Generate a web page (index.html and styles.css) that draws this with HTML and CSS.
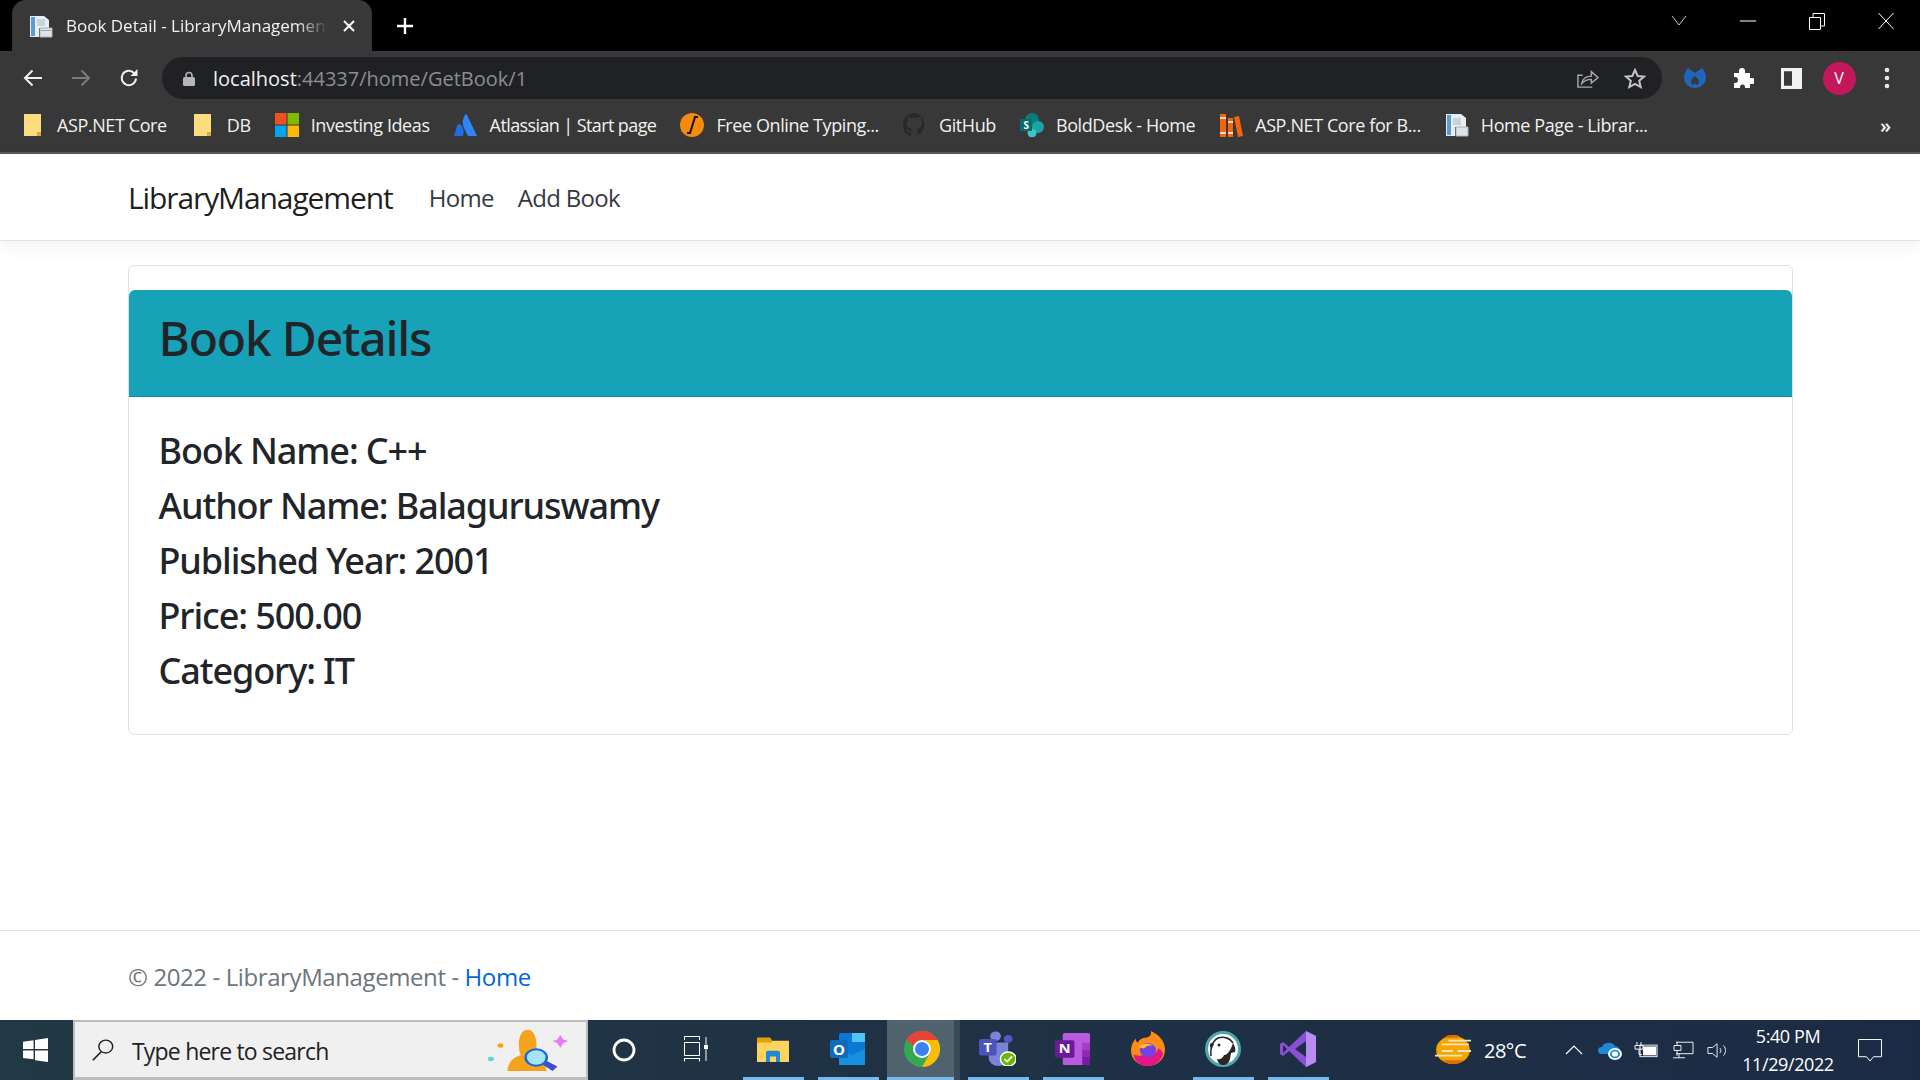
FILE: index.html
```html
<!DOCTYPE html>
<html lang="en">
<head>
  <meta charset="UTF-8" />
  <title>Book Detail - LibraryManagement</title>
  <link rel="stylesheet" href="styles.css">
</head>
<body>
  <!-- browser chrome -->
  <div class="tabstrip">
    <div class="tab">
      <svg class="favicon" viewBox="0 0 24 24"><path d="M1 2h14l5 4v8H10v9H1z" fill="#e8edf2"/><path d="M2 3h4v19H2z" fill="#5b9bd5"/><path d="M8 5h8v7H8z" fill="#c9d3dc"/><path d="M11 14h12v9H11z" fill="#dde3e8" stroke="#aab4bc"/><path d="M12 16h10v1H12z" fill="#9aa6b0"/></svg>
      <span class="tab-title">Book Detail - LibraryManagement</span>
      <svg class="tab-close" viewBox="0 0 14 14"><path d="M2 2l10 10M12 2L2 12" stroke="#fff" stroke-width="2"/></svg>
    </div>
    <svg class="new-tab" viewBox="0 0 18 18"><path d="M9 1v16M1 9h16" stroke="#fff" stroke-width="2.4"/></svg>
    <div class="win-controls">
      <span class="win-btn"><svg width="16" height="12" viewBox="0 0 16 12"><path d="M1 1l7 9 7-9" fill="none" stroke="#ccc"/></svg></span>
      <span class="win-btn"><svg width="16" height="12" viewBox="0 0 16 12"><path d="M0 6h16" stroke="#fff"/></svg></span>
      <span class="win-btn"><svg width="16" height="18" viewBox="0 0 16 18"><path d="M.5 5.5h11v12H.5zM4 5V1.5h11.5V14H12" fill="none" stroke="#fff"/></svg></span>
      <span class="win-btn"><svg width="16" height="18" viewBox="0 0 16 18"><path d="M.5 1l15 16M15.5 1L.5 17" stroke="#fff"/></svg></span>
    </div>
  </div>

  <div class="toolbar">
    <span class="tool"><svg width="20" height="18" viewBox="0 0 20 18"><path d="M19 9H2M9.500 1.500L2 9l7.500 7.500" fill="none" stroke="#f1f1f1" stroke-width="2"/></svg></span>
    <span class="tool"><svg width="20" height="18" viewBox="0 0 20 18"><path d="M1 9h17M10.500 1.500L18 9l-7.500 7.500" fill="none" stroke="#7b7b7b" stroke-width="2"/></svg></span>
    <span class="tool"><svg width="20" height="20" viewBox="0 0 20 20"><path d="M17 10.500a7.200 7.200 0 1 1-2-5.500" fill="none" stroke="#f1f1f1" stroke-width="2"/><path d="M18.500 1v7h-7z" fill="#f1f1f1"/></svg></span>
    <div class="omnibox">
      <svg class="lock" width="12" height="15" viewBox="0 0 12 15"><path d="M3 7V4.500a3 3 0 0 1 6 0V7" fill="none" stroke="#b5b5b5" stroke-width="1.600"/><rect y="6" width="12" height="9" rx="1.500" fill="#b5b5b5"/></svg>
      <span class="url"><span class="url-host">localhost</span>:44337/home/GetBook/1</span>
      <span class="omni-icon"><svg width="23" height="20" viewBox="0 0 24 22" preserveAspectRatio="none"><path d="M17 21H2V8h5" fill="none" stroke="#a9a9a9" stroke-width="1.500"/><path d="M6 17c1-5 5-8 10-8V4l7 6.500-7 6v-4c-4 0-7 1-10 4.500z" fill="none" stroke="#a9a9a9" stroke-width="1.500"/></svg></span>
      <span class="omni-icon"><svg width="22" height="21" viewBox="0 0 22 21"><path d="M11 2l2.700 6 6.300.6-4.800 4.200 1.500 6.200L11 15.800 5.300 19l1.500-6.200L2 8.600 8.300 8z" fill="none" stroke="#c4c4c4" stroke-width="2"/></svg></span>
    </div>
    <span class="tool tool-first"><svg width="22" height="20" viewBox="0 0 22 20"><path d="M4 0l7 5 7-5c3 3 4 7 4 10 0 5-5 10-11 10S0 15 0 10c0-3 1-7 4-10z" fill="#1f66b8"/><path d="M11 8l4 4-1 5q-3-3-6 0l-1-5z" fill="#383838"/></svg></span>
    <span class="tool"><svg width="22" height="22" viewBox="0 0 22 22"><path d="M2 6h5V4a3 3 0 0 1 6 0v2h5v5h2a3 3 0 0 1 0 6h-2v4h-5v-1a2.500 2.500 0 0 0-5 0v1H2v-5h1a3 3 0 0 0 0-6H2z" fill="#fff"/></svg></span>
    <span class="tool"><svg width="21" height="21" viewBox="0 0 21 20" preserveAspectRatio="none"><path fill-rule="evenodd" d="M0 0h21v20H0zM3 3v14h8V3z" fill="#f1f1f1"/></svg></span>
    <span class="tool"><span class="avatar">V</span></span>
    <span class="tool"><svg width="6" height="22" viewBox="0 0 6 22"><circle cx="3" cy="3" r="2.300" fill="#e8e8e8"/><circle cx="3" cy="11" r="2.300" fill="#e8e8e8"/><circle cx="3" cy="19" r="2.300" fill="#e8e8e8"/></svg></span>
  </div>

  <div class="bookmarks">
    <a class="mark"><svg class="mark-icon" viewBox="0 0 24 24"><path d="M3 1h17v22H3z" fill="#fbdc7f"/><path d="M16 19h4v4h-4z" fill="#d9a93a"/></svg>ASP.NET Core</a>
    <a class="mark"><svg class="mark-icon" viewBox="0 0 24 24"><path d="M3 1h17v22H3z" fill="#fbdc7f"/><path d="M16 19h4v4h-4z" fill="#d9a93a"/></svg>DB</a>
    <a class="mark"><svg class="mark-icon" viewBox="0 0 24 24"><path d="M0 0h11.500v11.500H0z" fill="#f25022"/><path d="M12.500 0H24v11.500H12.500z" fill="#7fba00"/><path d="M0 12.500h11.500V24H0z" fill="#00a4ef"/><path d="M12.500 12.500H24V24H12.500z" fill="#ffb900"/></svg>Investing Ideas</a>
    <a class="mark mark-tight"><svg class="mark-icon" viewBox="0 0 24 24"><path d="M7 12c-2-2-3-1-4 1L0 23h9c1-4 1-8-2-11z" fill="#1d6fe3"/><path d="M11 2c-3 5-3 10 0 15l3 6h9L13 2c-1-1-2-1-2 0z" fill="#2f86f6"/></svg>Atlassian | Start page</a>
    <a class="mark"><svg class="mark-icon" viewBox="0 0 24 24"><circle cx="12" cy="12" r="12" fill="#f58a0b"/><path d="M14 4h4M7 20h4M15 4L10 20" stroke="#111" stroke-width="2" fill="none"/></svg>Free Online Typing...</a>
    <a class="mark"><svg class="mark-icon" viewBox="0 0 24 24"><path d="M12 0a12 12 0 0 0-4 23.400v-4c-3 .6-4-1.400-4-2l-1.500-1.400c1-.6 2.500 0 3.500 1.500 1 1 2 .6 2.400.4 0-1 .5-1.500.8-1.800-3-.4-5.500-1.500-5.500-6 0-1.300.5-2.400 1.200-3.200 0-.4-.5-1.600.2-3.200 0 0 1-.4 3.400 1.200a11 11 0 0 1 6 0c2.300-1.600 3.300-1.200 3.300-1.200.7 1.600.2 2.800.1 3.200.8.800 1.200 1.900 1.200 3.200 0 4.500-2.700 5.600-5.400 6 .4.400.8 1 .8 2.200v4.100A12 12 0 0 0 12 0z" fill="#24292e"/></svg>GitHub</a>
    <a class="mark"><svg class="mark-icon" viewBox="0 0 24 24"><circle cx="12" cy="7" r="7" fill="#0b7c7c"/><circle cx="18" cy="14" r="6" fill="#1aa3a8"/><circle cx="12" cy="20" r="4.500" fill="#3cc6cc"/><rect x="0" y="6" width="12" height="12" fill="#086c6e"/><text x="6" y="16" class="s-mark">S</text></svg>BoldDesk - Home</a>
    <a class="mark"><svg class="mark-icon" viewBox="0 0 24 24"><path d="M1 1h6v23H1zM9 5h5v19H9zM15 4l5-1 4 20-5 1z" fill="#f4640c"/><path d="M1 5h6M1 20h6M9 9h5M9 20h5" stroke="#fff" stroke-width="1.500"/></svg>ASP.NET Core for B...</a>
    <a class="mark"><svg class="mark-icon" viewBox="0 0 24 24"><path d="M1 1h15l5 4v9H10v9H1z" fill="#e8edf2"/><path d="M2 2h4v20H2z" fill="#5b9bd5"/><path d="M8 5h8v7H8z" fill="#c9d3dc"/><path d="M11 14h12v9H11z" fill="#dde3e8" stroke="#aab4bc"/></svg>Home Page - Librar...</a>
    <span class="more">»</span>
  </div>

  <!-- the page itself -->
  <nav class="navbar">
    <a class="brand">LibraryManagement</a>
    <a class="nav-link">Home</a>
    <a class="nav-link">Add Book</a>
  </nav>

  <main class="content">
    <div class="card">
      <div class="card-header"><h2>Book Details</h2></div>
      <div class="card-body">
        <h4>Book Name: C++</h4>
        <h4>Author Name: Balaguruswamy</h4>
        <h4>Published Year: 2001</h4>
        <h4>Price: 500.00</h4>
        <h4>Category: IT</h4>
      </div>
    </div>
  </main>

  <footer class="footer">© 2022 - LibraryManagement - <a class="footer-link">Home</a></footer>

  <!-- windows taskbar -->
  <div class="taskbar">
    <span class="start"><svg width="25" height="24" viewBox="0 0 26 26" preserveAspectRatio="none"><path d="M0 4l11-1.600V12H0zM12.500 2.200L26 0v12H12.500zM0 13.500h11v9.600L0 21.600zM12.500 13.500H26V26l-13.500-2z" fill="#fff"/></svg></span>
    <div class="search">
      <svg width="24" height="24" viewBox="0 0 26 28" preserveAspectRatio="none"><circle cx="16" cy="10" r="7.500" fill="none" stroke="#222" stroke-width="1.600"/><path d="M11 16L2 26" stroke="#222" stroke-width="1.800"/></svg>
      <span class="search-text">Type here to search</span>
      <svg class="search-art" width="81" height="42" viewBox="0 0 84 56" preserveAspectRatio="none"><circle cx="13" cy="22" r="3" fill="#f5a300"/><circle cx="3" cy="40" r="3" fill="#5fd3e6"/><path d="M72 14l3-6 3 6 5 2-5 3-3 6-3-6-5-3z" fill="#e27ef2"/><path d="M20 56c2-16 9-19 14-21-3-7-4-33 7-34 9 0 11 20 8 33 6 3 9 8 12 22z" fill="#f7a21d"/><path d="M60 42l12 8-5 6-11-9z" fill="#3b4fd0"/><circle cx="50" cy="38" r="11" fill="#a7e3f2" stroke="#1667d9" stroke-width="2.500"/></svg>
    </div>
    <span class="cortana"><svg width="24" height="24" viewBox="0 0 24 24"><circle cx="12" cy="12" r="10" fill="none" stroke="#fff" stroke-width="2.800"/></svg></span>
    <span class="task-btn task-view"><svg width="24" height="26" viewBox="0 0 24 26"><path d="M.5 4V.5h15V4M.5 22v3.500M15.500 22v3.500M.5 22.500h15M.5 6.500h15v13H.5zM22 1v24" fill="none" stroke="#fff"/><rect x="20" y="9" width="4" height="4" fill="#fff"/></svg></span>
    <span class="task-btn is-open"><svg width="32" height="26" viewBox="0 0 32 28" preserveAspectRatio="none"><path d="M0 2h13l2 3h17v23H0z" fill="#ffd35c"/><path d="M0 2h13l2 3v2H0z" fill="#e3a008"/><path d="M9 28v-10q0-2 2-2h10q2 0 2 2v10h-4v-6h-6v6z" fill="#1f88d8"/></svg></span>
    <span class="task-btn is-open"><svg width="35" height="32" viewBox="0 0 35 32"><rect x="9" y="0" width="26" height="32" rx="2" fill="#0a78d4"/><path d="M22 0h13v9H22z" fill="#50c4f5"/><path d="M9 16l13 6 13-6v16H9z" fill="#1490df"/><rect y="7" width="18" height="18" rx="2" fill="#0f6cbd"/><text x="9" y="21.500" class="o-mark">O</text></svg></span>
    <span class="task-btn is-active"><svg width="36" height="36" viewBox="0 0 36 36"><circle cx="18" cy="18" r="18" fill="#34a853"/><path d="M18 0a18 18 0 0 1 15.600 9H18a9 9 0 0 0-8.400 5.800L2.400 9A18 18 0 0 1 18 0z" fill="#ea4335"/><path d="M33.600 9A18 18 0 0 1 18 36l7.800-13.500A9 9 0 0 0 18 9z" fill="#fbbc04"/><circle cx="18" cy="18" r="9" fill="#fff"/><circle cx="18" cy="18" r="7" fill="#3b82f1"/></svg></span>
    <span class="task-btn is-open"><svg width="37" height="35" viewBox="0 0 38 40" preserveAspectRatio="none"><circle cx="17" cy="6" r="5.500" fill="#7b83d6"/><circle cx="30" cy="9" r="4.500" fill="#5059c9"/><path d="M10 13h20v18a10 9 0 0 1-20 0z" fill="#7b83d6"/><rect y="9" width="18" height="19" rx="2" fill="#4b53bc"/><text x="9" y="24" class="o-mark">T</text><circle cx="30" cy="32" r="8" fill="#6bb700" stroke="#fff" stroke-width="1.500"/><path d="M26 32l3 3 5-6" fill="none" stroke="#fff" stroke-width="1.800"/></svg></span>
    <span class="task-btn is-open"><svg width="35" height="32" viewBox="0 0 36 40" preserveAspectRatio="none"><rect x="8" y="0" width="28" height="40" rx="2" fill="#ba5bdf"/><path d="M28 12h8v9h-8z" fill="#a23ec8"/><path d="M28 21h8v9h-8z" fill="#8d2bb3"/><path d="M28 30h8v10h-8z" fill="#7719aa"/><rect y="9" width="20" height="22" rx="2" fill="#6a1b9a"/><text x="10" y="25" class="o-mark">N</text></svg></span>
    <span class="task-btn"><svg width="34" height="35" viewBox="0 0 36 42" preserveAspectRatio="none"><path d="M18 42C8 42 0 34 0 24 0 18 2 13 5 9c0 3 1 4 2 5 2-4 5-6 8-6 5 0 7-4 6-8 8 4 15 12 15 22 0 12-8 20-18 20z" fill="#ff8a16"/><path d="M18 42C9 42 3 36 3 28c3 2 6 2 8 1 6 3 15 1 18-8 2 1 4 3 5 6-2 9-8 15-16 15z" fill="#e31587"/><circle cx="18" cy="23" r="8.500" fill="#7542e5"/><path d="M8 18c4-3 10-4 15-1-5 0-7 1-9 4-3 0-5-1-6-3z" fill="#ffbd2e"/></svg></span>
    <span class="task-btn is-open"><svg width="36" height="36" viewBox="0 0 36 36"><circle cx="18" cy="18" r="16.500" fill="#fff" stroke="#4fa6ad" stroke-width="3"/><path d="M6 25c-1-7 1-15 7-18 6-2 12 0 15 5" fill="none" stroke="#2c2523" stroke-width="1.600"/><path d="M6 12c-2 2-1 5 1 5l2-4z" fill="#2c2523"/><path d="M28 12c2 3 3 7 2 9l-4 1-1 6c-1 4-4 6-7 6-3 0-5-2-6-6 3 1 6-1 7-4 4 0 7-6 9-12z" fill="#2c2523"/><circle cx="14" cy="14" r="1.500" fill="#2c2523"/></svg></span>
    <span class="task-btn is-open"><svg width="36" height="36" viewBox="0 0 36 36"><path fill-rule="evenodd" d="M26 0l10 5v26l-10 5-17-16-6 5-3-2V13l3-2 6 5zM26 10L15 18l11 8zM3 14v8l4-4z" fill="#8a4fd6"/><path d="M26 0l10 5v26l-10 5z" fill="#b98cf0"/></svg></span>
    <div class="tray">
      <svg width="36" height="30" viewBox="0 0 32 32" preserveAspectRatio="none"><circle cx="16" cy="16" r="15" fill="#f5a700"/><path d="M10 1a15 15 0 0 1 12 0l-2 2H8zM16 31a15 15 0 0 0 10-4H6a15 15 0 0 0 10 4z" fill="#e06a00"/><path d="M12 6h20M6 10h24M6 17h10M20 17h12M0 22h24" stroke="#f5e6c0" stroke-width="2"/></svg>
      <span class="temp">28°C</span>
      <span class="tray-slot"><svg width="18" height="10" viewBox="0 0 18 10"><path d="M1 9l8-8 8 8" fill="none" stroke="#fff" stroke-width="1.200"/></svg></span>
      <span class="tray-slot"><svg width="24" height="19" viewBox="0 0 24 22" preserveAspectRatio="none"><path d="M4 15a4 4 0 0 1 0-8 7 7 0 0 1 13-1 5 5 0 0 1 3 9z" fill="#1e88d8"/><circle cx="17" cy="15" r="7" fill="#fff"/><circle cx="17" cy="15" r="4" fill="none" stroke="#1e88d8" stroke-width="2"/></svg></span>
      <span class="tray-slot"><svg width="24" height="16" viewBox="0 0 24 18" preserveAspectRatio="none"><path d="M3 0v4M7 0v4M1 4h8v4H1zM5 8v6h3" fill="none" stroke="#fff"/><rect x="6" y="3.500" width="17" height="13" fill="none" stroke="#fff"/><rect x="9" y="5" width="13" height="10" fill="#fff"/></svg></span>
      <span class="tray-slot"><svg width="24" height="18" viewBox="0 0 24 22" preserveAspectRatio="none"><path d="M6 1.500h17v14H6M7 1v4M4 5.500h7v6H4zM7 11v7M3 20.500h12M9 15.500v5" fill="none" stroke="#fff"/></svg></span>
      <span class="tray-slot"><svg width="22" height="17" viewBox="0 0 24 20" preserveAspectRatio="none"><path d="M1 6.500h5L11 2v16l-5-4.500H1z" fill="none" stroke="#fff"/><path d="M14 7c1.500 2 1.500 4 0 6M18 4c3 4 3 8 0 12" fill="none" stroke="#fff"/></svg></span>
      <div class="clock"><span>5:40 PM</span><span>11/29/2022</span></div>
      <svg class="notify" width="24" height="23" viewBox="0 0 24 24" preserveAspectRatio="none"><path d="M.5.500h23v18h-8L12 23l-3.500-4.500h-8z" fill="none" stroke="#fff"/></svg>
    </div>
  </div>
</body>
</html>
```

FILE: styles.css
```css
* {
  box-sizing: border-box;
}

body {
  margin: 0;
  height: 1080px;
  display: flex;
  flex-direction: column;
  overflow: hidden;
  font-family: 'Open Sans', 'Noto Sans', sans-serif;
  color: #212529;
  background: #fff;
}

/* tabs row */
.tabstrip {
  height: 51px;
  flex: none;
  display: flex;
  align-items: center;
  padding-left: 12px;
  background: #000;
}

.tab {
  width: 360px;
  height: 51px;
  display: flex;
  align-items: center;
  padding: 0 16px 0 17px;
  background: #383838;
  border-radius: 14px 14px 0 0;
}

.favicon {
  width: 24px;
  height: 24px;
  flex: none;
}

.tab-title {
  flex: 1;
  margin-left: 13px;
  overflow: hidden;
  white-space: nowrap;
  font-size: 17px;
  color: #f1f1f1;
  -webkit-mask-image: linear-gradient(90deg, #000 88%, transparent);
  mask-image: linear-gradient(90deg, #000 88%, transparent);
}

.tab-close {
  width: 14px;
  height: 14px;
  flex: none;
  margin-left: 14px;
}

.new-tab {
  width: 18px;
  height: 18px;
  margin-left: 24px;
}

.win-controls {
  margin-left: auto;
  display: flex;
  height: 42px;
  align-self: flex-start;
}

.win-btn {
  width: 69px;
  display: flex;
  align-items: center;
  justify-content: center;
}

/* toolbar */
.toolbar {
  height: 48px;
  flex: none;
  display: flex;
  align-items: flex-start;
  padding-left: 9px;
  background: #383838;
}

.tool {
  width: 48px;
  height: 54px;
  display: flex;
  align-items: center;
  justify-content: center;
}

.tool-first {
  margin-left: 9px;
}

.omnibox {
  width: 1500px;
  height: 42px;
  margin: 6px 0 0 9px;
  display: flex;
  align-items: center;
  padding: 0 3px 0 21px;
  background: #202124;
  border-radius: 21px;
}

.url {
  flex: 1;
  margin-left: 18px;
  font-size: 20px;
  color: #8e8e8e;
}

.url-host {
  color: #f1f1f1;
}

.omni-icon {
  width: 48px;
  display: flex;
  justify-content: center;
}

.avatar {
  width: 33px;
  height: 33px;
  border-radius: 50%;
  display: flex;
  align-items: center;
  justify-content: center;
  background: #c2185b;
  color: #fff;
  font-size: 16px;
}

/* bookmarks */
.bookmarks {
  height: 55px;
  flex: none;
  display: flex;
  align-items: center;
  padding: 0 0 1px 21px;
  background: #383838;
  border-bottom: 2px solid #5a5a5a;
}

.mark {
  display: flex;
  align-items: center;
  gap: 12px;
  margin-right: 24px;
  font-size: 18px;
  letter-spacing: -0.4px;
  color: #f1f1f1;
  white-space: nowrap;
}

.mark-tight {
  letter-spacing: -0.6px;
}

.mark-icon {
  width: 24px;
  height: 24px;
  flex: none;
}

.s-mark {
  font-size: 10px;
  font-weight: 700;
  fill: #fff;
  text-anchor: middle;
}

.more {
  margin-left: auto;
  margin-right: 29px;
  font-size: 20px;
  font-weight: 600;
  color: #f1f1f1;
}

/* page */
.navbar {
  height: 87px;
  flex: none;
  display: flex;
  align-items: center;
  padding-left: 128px;
  background: #fff;
  border-bottom: 1px solid #e3e3e3;
  box-shadow: 0 6px 18px rgba(0, 0, 0, 0.05);
  position: relative;
}

.brand {
  margin-right: 24px;
  font-size: 30px;
  letter-spacing: -1.1px;
  color: rgba(0, 0, 0, 0.9);
}

.nav-link {
  padding: 0 12px;
  font-size: 24px;
  letter-spacing: -0.7px;
  color: #343a40;
}

.content {
  flex: 1;
  padding-top: 24px;
}

.card {
  width: 1665px;
  margin: 0 auto;
  padding-top: 24px;
  border: 1px solid rgba(0, 0, 0, 0.125);
  border-radius: 6px;
}

.card-header {
  height: 107px;
  padding: 19px 30px;
  background: #17a2b8;
  border-bottom: 1px solid #1390a4;
  border-radius: 6px 6px 0 0;
}

.card-header h2 {
  margin: 0;
  font-family: 'Noto Sans', 'Open Sans', sans-serif;
  font-size: 48px;
  font-weight: 500;
  line-height: 58px;
  letter-spacing: -1.2px;
}

.card-body {
  padding: 32px 30px 30px;
}

.card-body h4 {
  margin: 0 0 12px;
  font-family: 'Noto Sans', 'Open Sans', sans-serif;
  font-size: 36px;
  font-weight: 500;
  line-height: 43px;
  letter-spacing: -1.1px;
}

.footer {
  height: 90px;
  flex: none;
  padding: 1px 0 0 128px;
  font-size: 24px;
  line-height: 90px;
  letter-spacing: -0.4px;
  color: #6c757d;
  border-top: 1px solid #e3e3e3;
}

.footer-link {
  color: #0366d6;
}

/* taskbar */
.taskbar {
  height: 60px;
  flex: none;
  display: flex;
  align-items: center;
  background: linear-gradient(90deg, #213845, #1c2b45);
}

.start {
  width: 71px;
  margin-right: 2px;
  display: flex;
  justify-content: center;
}

.search {
  width: 515px;
  height: 60px;
  display: flex;
  align-items: center;
  padding-left: 16px;
  background: #f0f0f0;
  border: 2px solid #bdbdbd;
  border-bottom-width: 3px;
}

.search-text {
  flex: 1;
  margin: 2px 0 0 17px;
  font-size: 23px;
  letter-spacing: -0.8px;
  color: #222;
}

.search-art {
  margin-right: 17px;
}

.cortana {
  width: 72px;
  display: flex;
  justify-content: center;
}

.task-btn {
  width: 75px;
  height: 60px;
  display: flex;
  align-items: center;
  justify-content: center;
  padding-bottom: 3px;
  position: relative;
}

.task-view {
  padding-right: 3px;
}

.task-btn.is-open::after {
  content: "";
  position: absolute;
  left: 8px;
  right: 6px;
  bottom: 0;
  height: 3px;
  background: #76b9ed;
}

.task-btn.is-active {
  padding-left: 2px;
  background: #4f626d;
  background-clip: padding-box;
  border-left: 2px solid transparent;
  border-right: 6px solid #3a4b57;
  box-shadow: inset 0 -3px 0 #76b9ed;
}

.o-mark {
  font-size: 15px;
  font-weight: 700;
  fill: #fff;
  text-anchor: middle;
}

.tray {
  flex: 1;
  display: flex;
  align-items: center;
  padding-left: 100px;
  color: #fff;
}

.temp {
  width: 72px;
  margin-left: 13px;
  font-size: 20px;
  letter-spacing: -0.5px;
}

.tray-slot {
  width: 36px;
  display: flex;
  justify-content: center;
}

.clock {
  width: 104px;
  display: flex;
  flex-direction: column;
  align-items: center;
  font-size: 18px;
  line-height: 28px;
  letter-spacing: -0.4px;
}

.notify {
  margin-left: 18px;
}
```
